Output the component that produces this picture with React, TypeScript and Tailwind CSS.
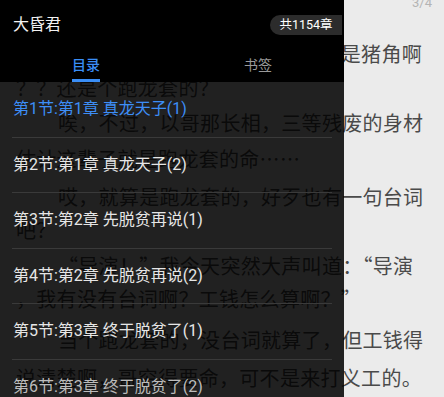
import React from 'react';

const PAGE_LINES: { text: string; indent?: boolean; mt: string }[] = [
  { text: '我靠，我是穿越了？我到底是主角还是猪角啊', mt: 'mt-[32px]' },
  { text: '？？还是个跑龙套的？', mt: 'mt-0' },
  { text: '唉，不过，以哥那长相，三等残废的身材', indent: true, mt: 'mt-[1px]' },
  { text: '估计这辈子就是跑龙套的命……', mt: 'mt-[2px]' },
  { text: '哎，就算是跑龙套的，好歹也有一句台词', indent: true, mt: 'mt-[4px]' },
  { text: '吧？', mt: 'mt-[-1px]' },
  { text: '“导演！”我今天突然大声叫道：“导演', indent: true, mt: 'mt-[2px]' },
  { text: '，我有没有台词啊？工钱怎么算啊？”', mt: 'mt-[-1px]' },
  { text: '当个跑龙套的，没台词就算了，但工钱得', indent: true, mt: 'mt-[7px]' },
  { text: '说清楚啊，哥穷得要命，可不是来打义工的。', mt: 'mt-[4px]' },
];

const CHAPTERS = [
  '第1节:第1章 真龙天子(1)',
  '第2节:第1章 真龙天子(2)',
  '第3节:第2章 先脱贫再说(1)',
  '第4节:第2章 先脱贫再说(2)',
  '第5节:第3章 终于脱贫了(1)',
  '第6节:第3章 终于脱贫了(2)',
];

export default function App() {
  return (
    <div className="relative w-[444px] h-[397px] overflow-hidden bg-[#ebebeb] font-['Roboto','Noto_Sans_CJK_SC',sans-serif]">
      {/* Reader page behind the drawer */}
      <div className="flex flex-col">
        <div className="h-[5px] leading-[5px] text-right pr-3 text-[13px] text-[#b4b4b4]">3/4</div>
        {PAGE_LINES.map((l, i) => (
          <div
            key={i}
            className={`${l.mt} h-[34px] leading-[34px] whitespace-nowrap text-[20px] tracking-[0.3px] text-[#4a4a4a] font-['Noto_Sans_CJK_SC',sans-serif] ${
              l.indent ? 'pl-[58px]' : 'pl-[16px]'
            }`}
          >
            {l.text}
          </div>
        ))}
      </div>

      {/* Catalog drawer */}
      <div className="absolute left-0 top-0 bottom-0 w-[344px] flex flex-col">
        {/* Header */}
        <div className="bg-black">
          <div className="h-[50px] flex items-center justify-between">
            <span className="pl-[13px] text-[16px] text-[#f2f2f2]">大昏君</span>
            <span className="mr-[2px] h-5 w-[72px] rounded-l-full bg-[#2c2c2c] flex items-center justify-center text-[12.5px] text-white">
              共1154章
            </span>
          </div>
          <div className="h-8 flex">
            <div className="flex-1 flex flex-col items-center pt-[7px]">
              <span className="text-[14px] leading-[16px] font-medium text-[#3a8ef6]">目录</span>
              <span className="mt-[6px] w-7 h-[2.5px] bg-[#3a8ef6]" />
            </div>
            <div className="flex-1 flex flex-col items-center pt-[7px]">
              <span className="text-[14px] leading-[16px] text-[#9a9a9a]">书签</span>
            </div>
          </div>
        </div>

        {/* Chapter list */}
        <div className="flex-1 bg-black/[0.86] overflow-hidden">
          {CHAPTERS.map((c, i) => (
            <div
              key={c}
              className="mx-3 h-[55.5px] flex items-center border-b border-[#3a3a3a]"
            >
              <span
                className={`pl-px text-[16px] whitespace-nowrap ${
                  i === 0 ? 'text-[#3d8ef7]' : i === 5 ? 'text-[#bcbcbc]' : 'text-[#e6e6e6]'
                }`}
              >
                {c}
              </span>
            </div>
          ))}
        </div>
      </div>
    </div>
  );
}
